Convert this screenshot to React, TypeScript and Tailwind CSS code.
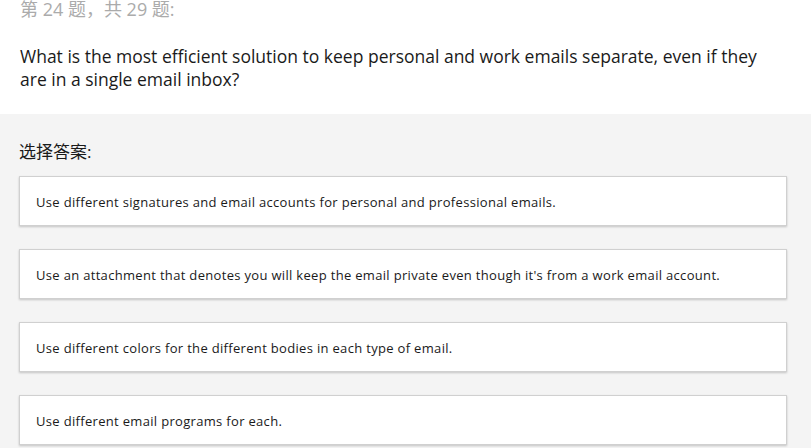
const OPTIONS = [
  "Use different signatures and email accounts for personal and professional emails.",
  "Use an attachment that denotes you will keep the email private even though it's from a work email account.",
  "Use different colors for the different bodies in each type of email.",
  "Use different email programs for each.",
];

export default function App() {
  return (
    <div
      className="w-[811px] h-[448px] overflow-hidden bg-white"
      style={{ fontFamily: '"Open Sans", "Noto Sans CJK SC", sans-serif' }}
    >
      {/* Question header */}
      <div className="bg-white px-5 pb-[23px]">
        <div className="-mt-[3px] h-[24px] text-[18px] leading-[24px] text-[#ababab]">
          第 24 题，共 29 题:
        </div>
        <p className="mt-[24px] text-[17.5px] leading-[23px] text-[#1a1a1a]">
          What is the most efficient solution to keep personal and work emails separate, even if they
          <br />
          are in a single email inbox?
        </p>
      </div>

      {/* Answers */}
      <div className="bg-[#f4f4f4] px-[19px] pt-[27px] pb-4 w-full h-full">
        <div className="text-[17px] leading-[22px] text-[#1a1a1a]">选择答案:</div>
        <div className="mt-[13px] flex flex-col gap-[23px] w-[768px]">
          {OPTIONS.map((o) => (
            <div
              key={o}
              className="h-[50px] flex items-center px-4 pt-[3px] bg-white border border-[#d0d0d0] shadow-[0_1px_2px_rgba(0,0,0,0.2)] text-[13px] tracking-[0.32px] text-[#1a1a1a]"
            >
              {o}
            </div>
          ))}
        </div>
      </div>
    </div>
  );
}
